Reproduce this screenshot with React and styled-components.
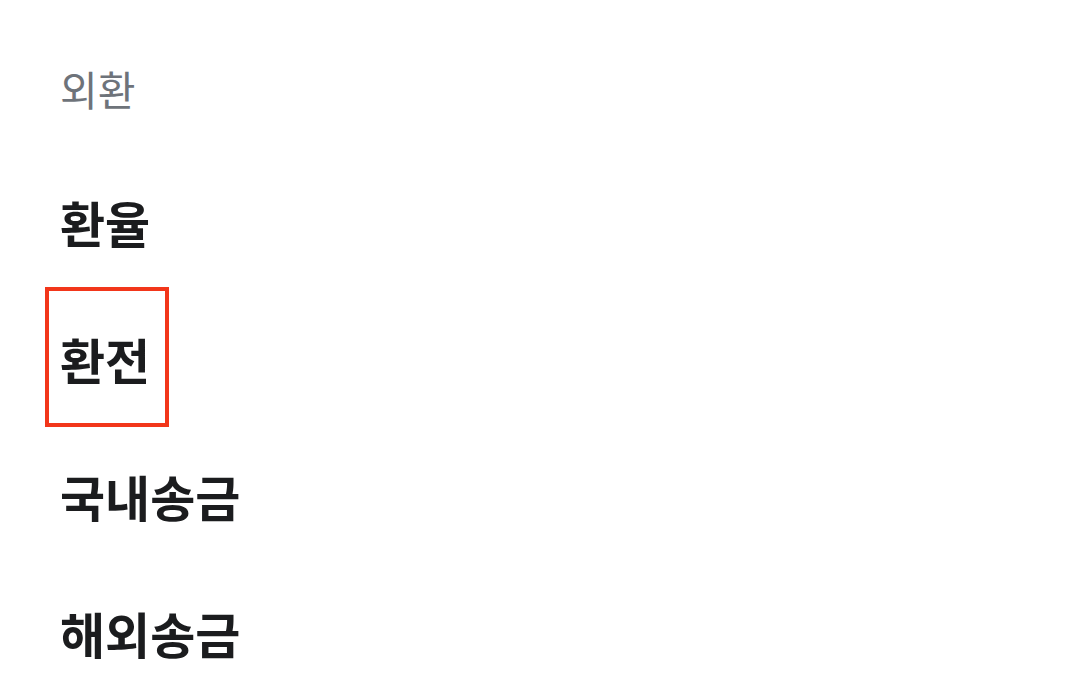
import React from 'react'
import styled, { createGlobalStyle } from 'styled-components'

const GlobalStyle = createGlobalStyle`
  body {
    margin: 0;
    background: #ffffff;
    font-family: "Noto Sans CJK KR", "Noto Sans", sans-serif;
    overflow: hidden;
  }
`

const Menu = styled.div`
  display: flex;
  flex-direction: column;
  padding: 56px 0 0 60px;
`

const SectionTitle = styled.div`
  font-size: 41px;
  line-height: 64px;
  color: #6e737a;
  font-weight: 400;
  margin-bottom: 70px;
`

const Item = styled.div`
  position: relative;
  align-self: flex-start;
  font-size: 49px;
  font-weight: 700;
  color: #1b1c1e;
  line-height: 64px;
  margin-bottom: 73px;

  &:last-child {
    margin-bottom: 0;
  }
`

const Highlight = styled.span`
  position: absolute;
  left: -15px;
  right: -19px;
  top: -40px;
  bottom: -36px;
  border: 4px solid #f2361a;
`

const items = ['환율', '환전', '국내송금', '해외송금']

export default function App() {
  return (
    <>
      <GlobalStyle />
      <Menu>
        <SectionTitle>외환</SectionTitle>
        {items.map(label => (
          <Item key={label}>
            {label}
            {label === '환전' && <Highlight />}
          </Item>
        ))}
      </Menu>
    </>
  )
}
